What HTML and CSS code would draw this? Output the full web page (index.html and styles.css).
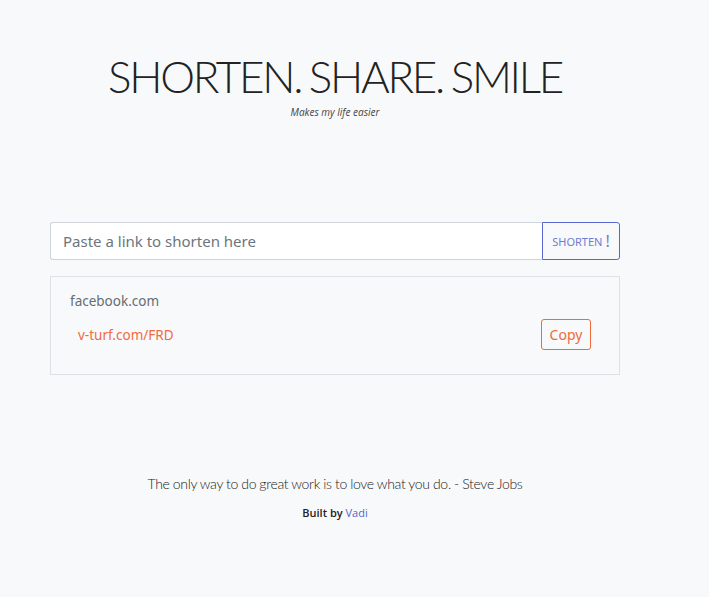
FILE: index.html
```html
<!DOCTYPE html>
<html>
	<head>
		<meta charset="utf-8">
		<title>Shorten. Share. Smile</title>
		<link rel="stylesheet" href="styles.css">
	</head>
	<body>
		<div class="wrap">
			<div class="head">
				<h1 class="title">SHORTEN. SHARE. SMILE</h1>
				<p class="tag">Makes my life easier</p>
			</div>
			<form class="bar" onsubmit="return false">
				<input class="link" type="text" placeholder="Paste a link to shorten here">
				<button class="go" type="submit">SHORTEN <span class="bang">!</span></button>
			</form>
			<div class="result">
				<div class="orig">facebook.com</div>
				<div class="row">
					<a class="short" href="#">v-turf.com/FRD</a>
					<button class="copy">Copy</button>
				</div>
			</div>
			<div class="foot">
				<p class="quote">The only way to do great work is to love what you do. - Steve Jobs</p>
				<p class="built">Built by <a href="#">Vadi</a></p>
			</div>
		</div>
	</body>
</html>
```

FILE: styles.css
```css
*{
	margin: 0;
	padding: 0;
	box-sizing: border-box;
}
body{
	background: #f8f9fb;
	font-family: "Noto Sans", "Open Sans", sans-serif;
	color: #333;
}
.wrap{
	width: 570px;
	margin-left: 50px;
}
.head{
	padding-top: 52px;
	text-align: center;
}
.title{
	font-family: Lato, sans-serif;
	font-weight: 300;
	font-size: 44px;
	line-height: 48px;
	color: #222;
	letter-spacing: -2.3px;
	word-spacing: -2px;
}
.tag{
	margin-top: 5px;
	font-family: "Open Sans", sans-serif;
	font-style: italic;
	font-size: 10px;
	color: #444;
}
.bar{
	display: flex;
	margin-top: 103px;
	height: 38px;
}
.link{
	flex: 1;
	border: 1px solid #ced4da;
	border-right: none;
	border-radius: 3px 0 0 3px;
	background: #fff;
	padding: 0 12px;
	font-family: "Noto Sans", sans-serif;
	font-size: 15px;
	color: #495057;
	outline: none;
}
.link::placeholder{
	color: #6c757d;
}
.go{
	width: 78px;
	border: 1px solid #5a67d0;
	border-radius: 0 3px 3px 0;
	background: #f8f9fb;
	color: #6f7bd6;
	font-family: "Noto Sans", sans-serif;
	font-size: 11px;
	display: flex;
	align-items: center;
	justify-content: center;
	gap: 3px;
}
.bang{
	font-size: 16px;
	line-height: 1;
}
.result{
	margin-top: 16px;
	border: 1px solid #dfe1e4;
	padding: 15px 19px 24px;
	height: 99px;
}
.orig{
	font-size: 13.5px;
	color: #666d74;
}
.row{
	display: flex;
	align-items: center;
	justify-content: space-between;
	margin-top: 9px;
	padding-left: 8px;
	padding-right: 9px;
}
.short{
	color: #f26a3f;
	font-size: 13.5px;
	text-decoration: none;
}
.copy{
	width: 50px;
	height: 31px;
	border: 1px solid #f06a3a;
	border-radius: 3px;
	background: transparent;
	color: #f06a3a;
	font-family: "Noto Sans", sans-serif;
	font-size: 14px;
}
.foot{
	text-align: center;
	margin-top: 100px;
}
.quote{
	font-family: Lato, sans-serif;
	font-weight: 300;
	font-size: 14px;
	letter-spacing: -0.3px;
	word-spacing: -0.3px;
	color: #222;
}
.built{
	margin-top: 13px;
	font-family: "Open Sans", sans-serif;
	font-weight: 600;
	font-size: 11px;
	color: #222;
}
.built a{
	color: #5663cc;
	font-weight: 400;
	text-decoration: none;
}
```
